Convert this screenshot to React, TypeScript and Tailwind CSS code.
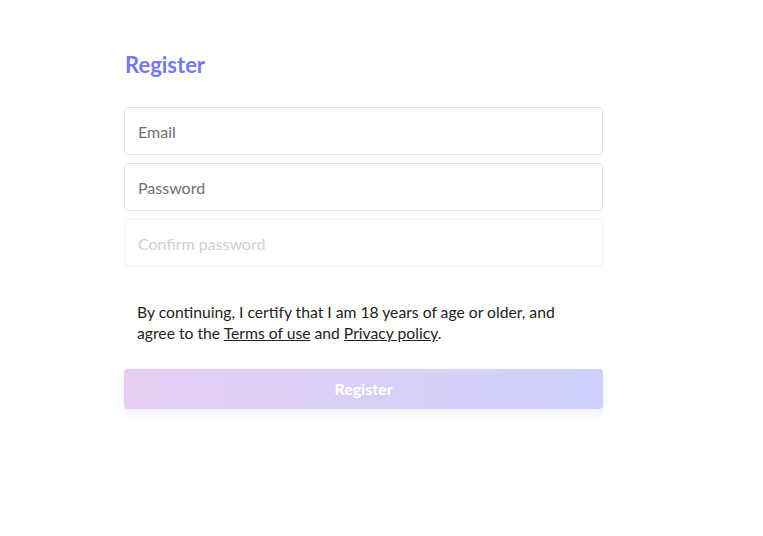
const fieldClass =
  "h-12 w-full rounded border border-[#e3e3e3] bg-white px-[13px] text-base text-[#555] placeholder:text-[#6f6f6f] outline-none";

const App = () => {
  return (
    <div className="min-h-screen bg-white font-['Lato',sans-serif]">
      <div className="ml-[124px] w-[479px] pt-[50px]">
        <h1 className="pl-px text-[22px] font-bold leading-[30px] text-[#7679e6]">Register</h1>

        <form className="mt-[27px] flex flex-col gap-2">
          <input type="email" placeholder="Email" className={fieldClass} />
          <input type="password" placeholder="Password" className={fieldClass} />
          <input
            type="password"
            placeholder="Confirm password"
            disabled
            className="h-12 w-full rounded border border-[#f3f3f3] bg-white px-[13px] text-base text-[#555] placeholder:text-[#cfcfcf] outline-none"
          />

          <p className="mt-[27px] px-[13px] text-[15.7px] leading-[21px] text-[#222]">
            By continuing, I certify that I am 18 years of age or older, and agree to the{" "}
            <a href="#" className="underline">Terms of use</a> and{" "}
            <a href="#" className="underline">Privacy policy</a>.
          </p>

          <button
            type="button"
            className="mt-[17px] h-10 w-full rounded bg-gradient-to-r from-[#e5cef2] to-[#cdd0fb] text-base font-bold text-white shadow-[0_4px_8px_rgba(120,110,220,0.12)]"
          >
            Register
          </button>
        </form>
      </div>
    </div>
  );
};

export default App;
